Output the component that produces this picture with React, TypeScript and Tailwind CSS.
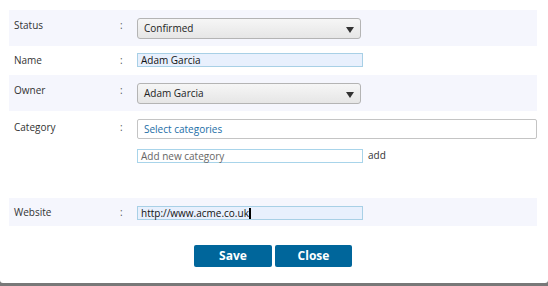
import React from "react";

const font = { fontFamily: '"Open Sans", "Noto Sans", sans-serif' };

function Arrow() {
  return (
    <svg width="8" height="6" viewBox="0 0 8 6" className="absolute right-[6px] top-[8px]">
      <path d="M0 0 H8 L4 6 Z" fill="#333" />
    </svg>
  );
}

function Select({ value }: { value: string }) {
  return (
    <div className="relative w-[224px] h-[21px] rounded-[3px] border border-[#b4b4b4] bg-gradient-to-b from-[#f6f6f6] to-[#e6e6e6] pl-[6px] text-[10px] leading-[19px] text-[#222]">
      {value}
      <Arrow />
    </div>
  );
}

function Label({ text }: { text: string }) {
  return (
    <>
      <div className="w-[111px] pl-[5px] text-[10px] text-[#333]">{text}</div>
      <div className="w-[17px] text-[10px] text-[#555]">:</div>
    </>
  );
}

export default function App() {
  return (
    <div className="w-[548px] h-[286px] bg-[#787878]" style={font}>
      <div className="w-[548px] h-[283px] bg-white rounded-b-[3px] pt-[10px]">
        <div className="ml-[9px] w-[528px]">
          {/* Status */}
          <div className="flex h-[36px] bg-[#f5f6fd] pt-[8px]">
            <div className="flex items-start leading-[14px]">
              <Label text="Status" />
            </div>
            <Select value="Confirmed" />
          </div>
          {/* Name */}
          <div className="flex h-[29px] pt-[7px] leading-[14px]">
            <Label text="Name" />
            <div className="w-[226px] h-[14px] bg-[#e8f0fd] border border-[#a8d0e6] pl-[3px] text-[10px] leading-[12px] text-[#111]">
              Adam Garcia
            </div>
          </div>
          {/* Owner */}
          <div className="flex h-[36px] bg-[#f5f6fd] pt-[8px]">
            <div className="flex items-start leading-[14px]">
              <Label text="Owner" />
            </div>
            <Select value="Adam Garcia" />
          </div>
          {/* Category */}
          <div className="flex h-[87px] pt-[8px]">
            <div className="flex items-start leading-[16px]">
              <Label text="Category" />
            </div>
            <div className="flex flex-col">
              <div className="w-[400px] h-[20px] rounded-[2px] border border-[#c4c4c4] bg-white pl-[6px] text-[10px] leading-[18px] text-[#1b6da6]">
                Select categories
              </div>
              <div className="flex items-center mt-[9px]">
                <div className="w-[226px] h-[14px] border border-[#a8d4ea] bg-white pl-[3px] text-[10px] leading-[12px] text-[#666]">
                  Add new category
                </div>
                <span className="ml-[5px] text-[10px] text-[#333]">add</span>
              </div>
            </div>
          </div>
          {/* Website */}
          <div className="flex h-[28px] bg-[#f5f6fd] pt-[8px] leading-[12px]">
            <Label text="Website" />
            <div className="w-[226px] h-[14px] bg-[#e8f0fd] border border-[#a8d0e6] pl-[3px] text-[10px] leading-[12px] text-[#111] flex items-center">
              http://www.acme.co.uk
              <span className="inline-block w-[2px] h-[11px] bg-black" />
            </div>
          </div>
        </div>
        {/* Buttons */}
        <div className="flex justify-center gap-[3px] mt-[19px] pr-[2px]">
          <button className="w-[78px] h-[22px] rounded-[2px] bg-[#00669b] text-white font-bold text-[12px] leading-[22px]">
            Save
          </button>
          <button className="w-[77px] h-[22px] rounded-[2px] bg-[#00669b] text-white font-bold text-[12px] leading-[22px]">
            Close
          </button>
        </div>
      </div>
    </div>
  );
}
